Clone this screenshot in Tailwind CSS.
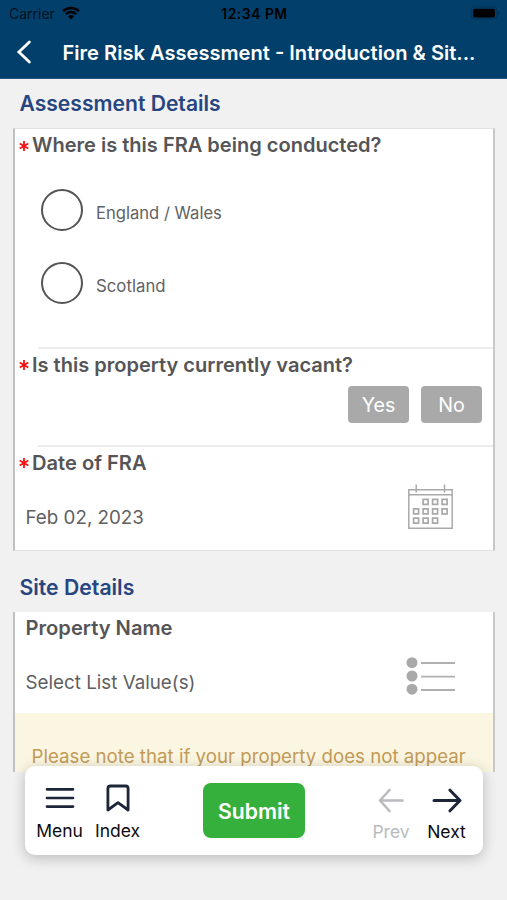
<!DOCTYPE html>
<html lang="en">
<head>
<meta charset="utf-8">
<title>Fire Risk Assessment</title>
<script src="https://cdn.jsdelivr.net/npm/@tailwindcss/browser@4"></script>
</head>
<body class="bg-[#f1f1f1] font-['Inter',sans-serif] text-[#555557]">
<div class="relative flex h-[900px] w-[507px] flex-col overflow-hidden whitespace-nowrap">
  <header class="h-[79px] shrink-0 border-b border-[#24587f] bg-[#023f6b]">
    <div class="grid h-[28px] grid-cols-3 items-center pl-[9px] pr-[7px] text-black">
      <div class="flex items-center gap-[7px] text-[14px] text-black/75">
        <span class="-translate-y-px">Carrier</span>
        <svg class="h-[14px] w-[18px] -translate-y-px" viewBox="0 0 18 14" fill="none" stroke="#000" stroke-width="2.5"><path d="M1 5.2a11.5 11.5 0 0 1 16 0M3.9 8.2a7.3 7.3 0 0 1 10.2 0"/><path d="M9 13.4 6 10.4a4.3 4.3 0 0 1 6 0z" fill="#000" stroke="none"/></svg>
      </div>
      <div class="text-center text-[13.8px] font-semibold tracking-[0.55px]">12:34 PM</div>
      <div class="flex items-center justify-end">
        <svg class="h-[14px] w-[30px] -translate-y-px" viewBox="0 0 30 14"><rect x="1" y="1" width="26" height="12" rx="3.5" fill="none" stroke="#000" stroke-opacity=".2"/><rect x="3" y="2.8" width="22" height="8.8" rx="1.8"/><path d="M28.3 5v4c1.4-.7 1.4-3.3 0-4z" fill-opacity=".3"/></svg>
      </div>
    </div>
    <div class="flex h-[50px] items-center pl-[16px]">
      <svg class="h-[24px] w-[16px] -translate-y-px" viewBox="0 0 16 24" fill="none" stroke="#fff" stroke-width="2.8" stroke-linecap="round" stroke-linejoin="miter"><path d="M13.4 2 2.9 12l10.5 10"/></svg>
      <h1 class="pl-[30.5px] text-[20.1px] leading-[50px] font-semibold text-white">Fire Risk Assessment - Introduction &amp; Sit...</h1>
    </div>
  </header>

  <main class="flex h-[693px] flex-col overflow-hidden pr-[12px] pl-[13px]">
    <h2 class="h-[48.5px] shrink-0 pl-[6.5px] text-[21.1px] leading-[49px] font-semibold text-[#27457f]">Assessment Details</h2>
    <section class="h-[423px] shrink-0 border-y border-r-2 border-l-2 border-y-[#e2e2e2] border-r-[#c8c8c8] border-l-[#c0c0c0] bg-white">
      <div class="h-[218.5px]">
        <div class="flex h-[32px] items-center pl-[4px]">
          <svg class="mr-[3px] h-[10px] w-[10px] translate-y-px" viewBox="0 0 10 10" stroke="#f61212" stroke-width="1.8"><path d="M5 0v10M.7 2.5l8.6 5M.7 7.5l8.6-5"/></svg>
          <h3 class="translate-y-px text-[20.05px] font-semibold">Where is this FRA being conducted?</h3>
        </div>
        <div class="flex flex-col gap-[31px] pt-[28px] pl-[26px]">
          <label class="flex items-center gap-[13px]"><span class="size-[42px] rounded-full border-2 border-[#545456]"></span><span class="pt-[7px] text-[16.6px] leading-none text-[#626264]">England / Wales</span></label>
          <label class="flex items-center gap-[13px]"><span class="size-[42px] rounded-full border-2 border-[#545456]"></span><span class="pt-[7px] text-[16.8px] leading-none text-[#626264]">Scotland</span></label>
        </div>
      </div>
      <div class="ml-[23px] h-[2px] bg-[#ececec]"></div>
      <div class="h-[96px]">
        <div class="flex h-[32px] items-center pl-[4px]">
          <svg class="mr-[3px] h-[10px] w-[10px]" viewBox="0 0 10 10" stroke="#f61212" stroke-width="1.8"><path d="M5 0v10M.7 2.5l8.6 5M.7 7.5l8.6-5"/></svg>
          <h3 class="text-[20.03px] font-semibold">Is this property currently vacant?</h3>
        </div>
        <div class="flex justify-end gap-[12px] pt-[4.5px] pr-[11px]">
          <button class="h-[37px] w-[61px] rounded-[4px] bg-[#a9a9a9] pt-[2px] text-[19.7px] leading-[35px] text-white">Yes</button>
          <button class="h-[37px] w-[61px] rounded-[4px] bg-[#a9a9a9] pt-[2px] text-[19.7px] leading-[35px] text-white">No</button>
        </div>
      </div>
      <div class="ml-[23px] h-[2px] bg-[#ececec]"></div>
      <div>
        <div class="flex h-[32px] items-center pl-[4px]">
          <svg class="mr-[3px] h-[10px] w-[10px]" viewBox="0 0 10 10" stroke="#f61212" stroke-width="1.8"><path d="M5 0v10M.7 2.5l8.6 5M.7 7.5l8.6-5"/></svg>
          <h3 class="text-[20.1px] font-semibold">Date of FRA</h3>
        </div>
        <div class="flex items-start justify-between pt-[5px] pr-[40px] pl-[10.5px]">
          <span class="pt-[18px] text-[18.8px] leading-[32px] text-[#606062]">Feb 02, 2023</span>
          <svg class="h-[46px] w-[46px] translate-x-[0.5px]" viewBox="0 0 46 46" fill="none" stroke="#a9a9a9" stroke-width="1.5"><path d="M1.3 5.8h43.4v38.4H1.3zM1.3 10.8h43.4M8.7.4v8.2M37 .4v8.2"/><path stroke-width="1.7" d="M15.6 15.4h5v5h-5zM25.1 15.4h5v5h-5zM34.6 15.4h5v5h-5zM6.1 24.8h5v5h-5zM15.6 24.8h5v5h-5zM25.1 24.8h5v5h-5zM34.6 24.8h5v5h-5zM6.1 34.2h5v5h-5zM15.6 34.2h5v5h-5zM25.1 34.2h5v5h-5z"/></svg>
        </div>
      </div>
    </section>
    <h2 class="h-[61.5px] shrink-0 pt-[12px] pl-[6.5px] text-[21.2px] leading-[49px] font-semibold text-[#27457f]">Site Details</h2>
    <section class="h-[160px] shrink-0 overflow-hidden border-r-2 border-l-2 border-r-[#c8c8c8] border-l-[#c0c0c0] bg-white">
      <div class="flex h-[101px] justify-between pr-[37px] pl-[10.5px]">
        <div>
          <h3 class="text-[20.15px] leading-[32px] font-semibold">Property Name</h3>
          <p class="pt-[22px] text-[18.8px] leading-[33px] text-[#606062]">Select List Value(s)</p>
        </div>
        <svg class="mt-[45px] h-[38px] w-[50px]" viewBox="0 0 50 38" fill="#a9a9a9"><circle cx="6" cy="5.7" r="5.5"/><circle cx="6" cy="19" r="5.5"/><circle cx="6" cy="32.2" r="5.5"/><path stroke="#b0b0b0" stroke-width="1.8" d="M15 6h34M15 19.6h34M15 33h34"/></svg>
      </div>
      <div class="h-[59px] bg-[#fbf6e1] pt-[27px] pl-[16.5px] text-[18.7px] leading-[33px] text-[#c39b58]">Please note that if your property does not appear</div>
    </section>
  </main>

  <nav class="absolute top-[766px] left-[25px] flex h-[89px] w-[458px] items-center rounded-[10px] bg-white text-[17.5px] text-[#0c0c0e] shadow-[0_3px_14px_rgba(0,0,0,0.24)]">
    <div class="flex h-full w-[69px] flex-col items-center pt-[19px]">
      <svg class="h-[26px] w-[32px]" viewBox="0 0 32 26" stroke="#1d2638" stroke-width="2.7" stroke-linecap="round"><path d="M3 4.3h26M3 13h26M3 21.6h26"/></svg>
      <span class="mt-[9px] leading-[22px]">Menu</span>
    </div>
    <div class="flex h-full w-[47px] flex-col items-center pt-[18px]">
      <svg class="h-[28px] w-[24px]" viewBox="0 0 24 28" fill="none" stroke="#1d2638" stroke-width="2.8" stroke-linejoin="round"><path d="M1.9 26V4.4c0-1.6.8-2.4 2.4-2.4h15.4c1.6 0 2.4.8 2.4 2.4V26L12 18.6z"/></svg>
      <span class="mt-[8px] leading-[22px]">Index</span>
    </div>
    <button class="ml-[62px] h-[55px] w-[102px] rounded-[8px] bg-[#36b03c] pt-[2px] text-[21.2px] leading-[53px] font-semibold text-white">Submit</button>
    <div class="ml-[58px] flex h-full w-[56px] flex-col items-center pt-[22px] text-[#b9bbbe]">
      <svg class="h-[25px] w-[26px]" viewBox="0 0 26 25" fill="none" stroke="#b9bbbe" stroke-width="2.6" stroke-linecap="round" stroke-linejoin="round"><path d="M24.5 12.5H2M11.5 2 2 12.5 11.5 23"/></svg>
      <span class="mt-[8px] leading-[22px]">Prev</span>
    </div>
    <div class="flex h-full w-[55px] flex-col items-center pt-[22px]">
      <svg class="h-[25px] w-[30px]" viewBox="0 0 30 25" fill="none" stroke="#1d2638" stroke-width="3" stroke-linecap="round" stroke-linejoin="round"><path d="M2 12.5h26M18 2.2l10 10.3-10 10.3"/></svg>
      <span class="mt-[8px] leading-[22px]">Next</span>
    </div>
  </nav>
</div>
</body>
</html>
